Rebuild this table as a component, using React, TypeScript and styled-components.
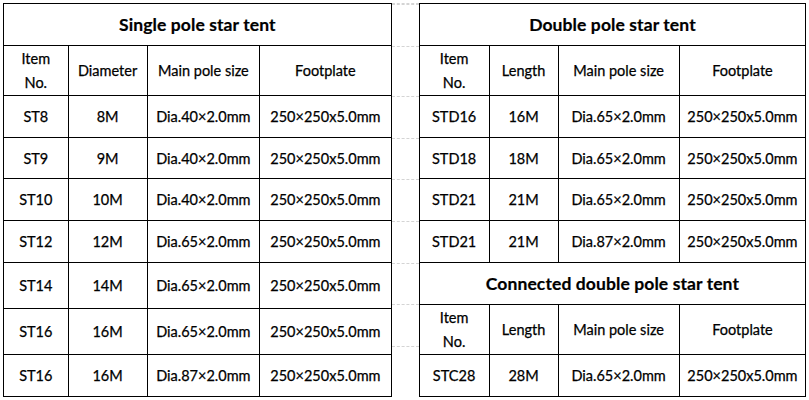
import React from 'react';
import styled, { createGlobalStyle } from 'styled-components';

const GlobalStyle = createGlobalStyle`
  html, body {
    margin: 0;
    padding: 0;
    background: #ffffff;
  }
  body {
    font-family: Lato, "Open Sans", "Liberation Sans", sans-serif;
    color: #000;
  }
`;

const Sheet = styled.div`
  display: flex;
  align-items: flex-start;
  padding: 3px 0 0 3px;
`;

const Table = styled.table<{ $width: number }>`
  width: ${(p) => p.$width}px;
  border-collapse: collapse;
  table-layout: fixed;
  flex: none;
`;

const Row = styled.tr<{ $h: number }>`
  height: ${(p) => p.$h}px;
`;

const TitleCell = styled.th`
  border: 1.5px solid #000;
  font-size: 17.5px;
  font-weight: 700;
  text-align: center;
  vertical-align: middle;
  padding: 0;
  letter-spacing: 0.1px;
  -webkit-text-stroke: 0.2px #000;
`;

const HeadCell = styled.td`
  border: 1.5px solid #000;
  font-size: 14.5px;
  line-height: 24px;
  text-align: center;
  vertical-align: middle;
  padding: 0 2px;
  color: #000;
  -webkit-text-stroke: 0.25px #000;
`;

const Cell = styled.td`
  border: 1.5px solid #000;
  font-size: 14.5px;
  text-align: center;
  vertical-align: middle;
  padding: 0;
  white-space: nowrap;
  color: #000;
  -webkit-text-stroke: 0.25px #000;
`;

const Gutter = styled.div`
  flex: none;
  width: 27px;
  display: flex;
  flex-direction: column;
  border-top: 1px dashed #d4d4d4;
`;

const GutterLine = styled.div<{ $h: number }>`
  height: ${(p) => p.$h}px;
  border-top: 1px dashed #d4d4d4;
  box-sizing: border-box;
`;

type Spec = {
  title: string;
  second: string;
  rows: string[][];
};

const single: Spec = {
  title: 'Single pole star tent',
  second: 'Diameter',
  rows: [
    ['ST8', '8M', 'Dia.40×2.0mm', '250×250x5.0mm'],
    ['ST9', '9M', 'Dia.40×2.0mm', '250×250x5.0mm'],
    ['ST10', '10M', 'Dia.40×2.0mm', '250×250x5.0mm'],
    ['ST12', '12M', 'Dia.65×2.0mm', '250×250x5.0mm'],
    ['ST14', '14M', 'Dia.65×2.0mm', '250×250x5.0mm'],
    ['ST16', '16M', 'Dia.65×2.0mm', '250×250x5.0mm'],
    ['ST16', '16M', 'Dia.87×2.0mm', '250×250x5.0mm'],
  ],
};

const double: Spec = {
  title: 'Double pole star tent',
  second: 'Length',
  rows: [
    ['STD16', '16M', 'Dia.65×2.0mm', '250×250x5.0mm'],
    ['STD18', '18M', 'Dia.65×2.0mm', '250×250x5.0mm'],
    ['STD21', '21M', 'Dia.65×2.0mm', '250×250x5.0mm'],
    ['STD21', '21M', 'Dia.87×2.0mm', '250×250x5.0mm'],
  ],
};

const connected: Spec = {
  title: 'Connected double pole star tent',
  second: 'Length',
  rows: [['STC28', '28M', 'Dia.65×2.0mm', '250×250x5.0mm']],
};

const Header = ({ second }: { second: string }) => (
  <Row $h={50}>
    <HeadCell>
      Item
      <br />
      No.
    </HeadCell>
    <HeadCell>{second}</HeadCell>
    <HeadCell>Main pole size</HeadCell>
    <HeadCell>Footplate</HeadCell>
  </Row>
);

const Section = ({ spec, heights }: { spec: Spec; heights: number[] }) => (
  <>
    <Row $h={42}>
      <TitleCell colSpan={4}>{spec.title}</TitleCell>
    </Row>
    <Header second={spec.second} />
    {spec.rows.map((r, i) => (
      <Row key={i} $h={heights[i]}>
        {r.map((c, j) => (
          <Cell key={j}>{c}</Cell>
        ))}
      </Row>
    ))}
  </>
);

const leftCols = [64.6, 79, 112.6, 131.4];
const rightCols = [70, 69, 121, 126.7];
const gutterRows = [42, 50, 42, 41, 42, 42, 41, 42, 51];

export default function App() {
  return (
    <>
      <GlobalStyle />
      <Sheet>
        <Table $width={387.6}>
          <colgroup>
            {leftCols.map((w, i) => (
              <col key={i} style={{ width: w }} />
            ))}
          </colgroup>
          <tbody>
            <Section spec={single} heights={[42, 41, 42, 42, 46, 46, 42]} />
          </tbody>
        </Table>
        <Gutter>
          {gutterRows.map((h, i) => (
            <GutterLine key={i} $h={h} />
          ))}
        </Gutter>
        <Table $width={386.7}>
          <colgroup>
            {rightCols.map((w, i) => (
              <col key={i} style={{ width: w }} />
            ))}
          </colgroup>
          <tbody>
            <Section spec={double} heights={[42, 41, 42, 42]} />
            <Section spec={connected} heights={[42]} />
          </tbody>
        </Table>
      </Sheet>
    </>
  );
}
